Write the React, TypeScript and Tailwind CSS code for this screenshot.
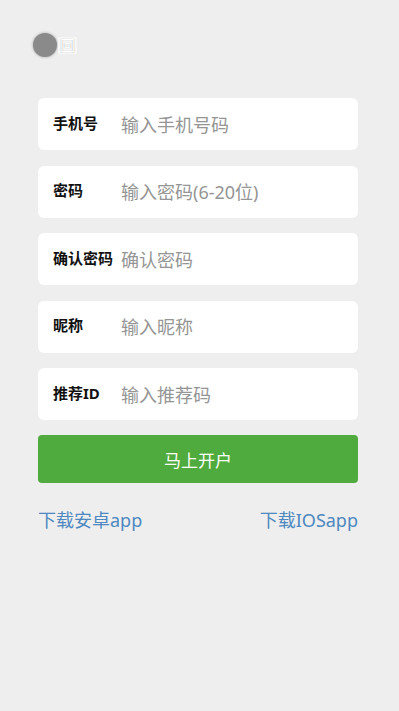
import React from "react";

const fields = [
  { label: "手机号", placeholder: "输入手机号码" },
  { label: "密码", placeholder: "输入密码(6-20位)" },
  { label: "确认密码", placeholder: "确认密码" },
  { label: "昵称", placeholder: "输入昵称" },
  { label: "推荐ID", placeholder: "输入推荐码" },
];

export default function App() {
  return (
    <div
      className="w-[399px] h-[711px] bg-[#eeeeee] overflow-hidden"
      style={{ fontFamily: '"Noto Sans", "Noto Sans CJK SC", sans-serif' }}
    >
      <div className="relative h-[98px]">
        <div className="absolute left-[33px] top-[33px] flex items-center">
          <div className="w-[24px] h-[24px] rounded-full bg-[#8a8a8a] shadow-[0_0_3px_#a0a0a0]" />
          <span className="ml-[1px] px-[2px] bg-[#f7f7f7] rounded-[2px] text-[15px] leading-[17px] text-white [text-shadow:0_0_1px_#999]">回</span>
        </div>
      </div>
      <div className="ml-[38px] w-[320px] flex flex-col">
        <div className="flex flex-col gap-[15.5px]">
          {fields.map((f) => (
            <div key={f.label} className="h-[52px] bg-white rounded-[6px] flex items-center pl-[15px]">
              <span className="w-[68px] text-[15px] font-bold text-[#111] -mt-[2px] whitespace-nowrap">{f.label}</span>
              <span className="text-[18px] text-[#959595] mt-[2px] whitespace-nowrap">{f.placeholder}</span>
            </div>
          ))}
        </div>
        <div className="mt-[15px] h-[48px] bg-[#4fab3d] rounded-[4px] flex items-center justify-center text-white text-[17px] pt-[3px]">
          马上开户
        </div>
        <div className="mt-[24px] flex justify-between text-[18px] text-[#4d88c0]">
          <span>下载安卓app</span>
          <span>下载IOSapp</span>
        </div>
      </div>
    </div>
  );
}
